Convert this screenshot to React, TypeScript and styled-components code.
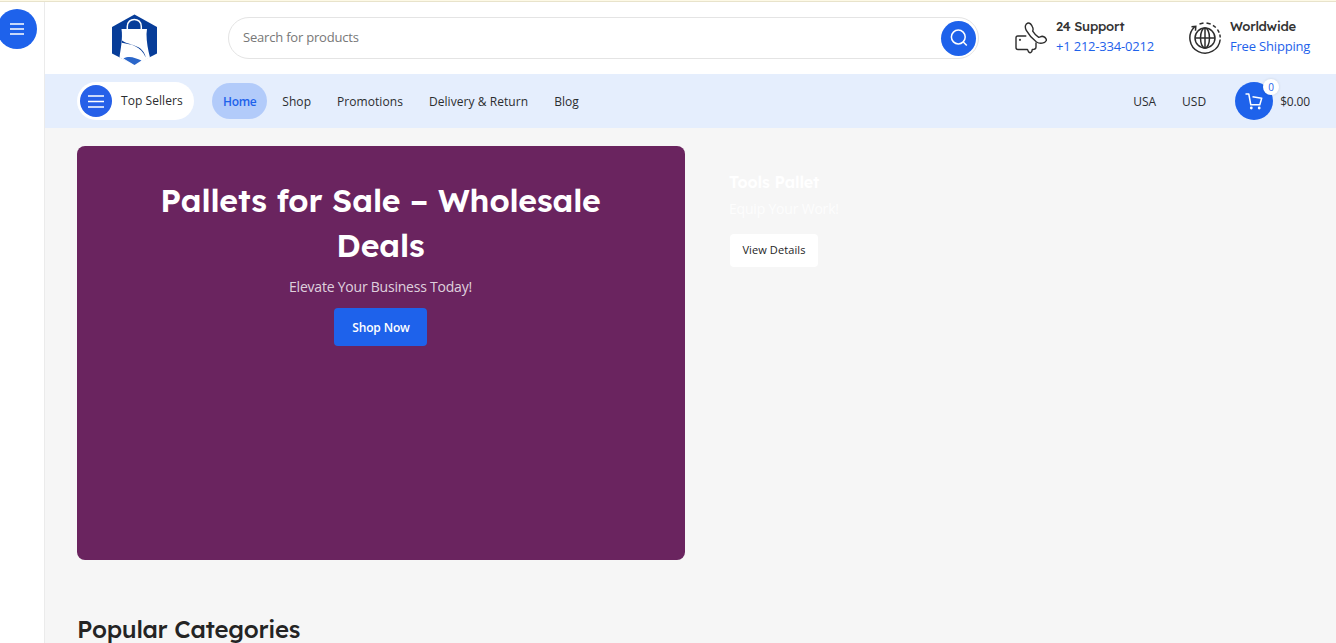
import React from "react";
import styled, { createGlobalStyle } from "styled-components";

const blue = "#1e62eb";
const heading = `Lexend, Lato, "Open Sans", sans-serif`;

const GlobalStyle = createGlobalStyle`
  * { box-sizing: border-box; }
  body { margin: 0; background: #f6f6f6; color: #2b2d30; font-family: "Open Sans", sans-serif; font-size: 13px; overflow: hidden; }
  a { color: inherit; text-decoration: none; }
  h1, h2, h3, p { margin: 0; }
  button { border: 0; padding: 0; font-family: inherit; }
  svg { display: block; flex: none; }
`;

const Page = styled.div`
  height: 643px;
  display: flex;
  flex-direction: column;
  overflow: hidden;
`;
const TopStrip = styled.div`
  height: 2px;
  flex: none;
  background: #fdf9e6;
  border-bottom: 1px solid #e8e3cb;
`;
const Shell = styled.div`
  flex: 1;
  display: flex;
  min-height: 0;
`;
const Rail = styled.aside`
  width: 45px;
  flex: none;
  background: #fff;
  border-right: 1px solid #ebebeb;
  padding-top: 7px;
`;
const RailButton = styled.button`
  width: 40px;
  height: 40px;
  margin-left: -3px;
  border-radius: 50%;
  background: ${blue};
  display: flex;
  align-items: center;
  justify-content: center;
`;
const Main = styled.div`
  flex: 1;
  min-width: 0;
`;
const Header = styled.header`
  height: 72px;
  background: #fff;
  display: flex;
  align-items: center;
  padding-left: 67px;
`;
const Search = styled.div`
  width: 751px;
  height: 42px;
  margin-left: 71px;
  border: 1px solid #e4e4e4;
  border-radius: 21px;
  display: flex;
  align-items: center;
  justify-content: space-between;
  padding: 0 2px 0 14px;
  color: #777;
`;
const SearchText = styled.span`
  font-size: 13px;
  line-height: 18px;
  letter-spacing: -0.2px;
  padding-bottom: 2px;
`;
const SearchButton = styled.button`
  width: 35px;
  height: 35px;
  border-radius: 50%;
  background: ${blue};
  display: flex;
  align-items: center;
  justify-content: center;
`;
const Info = styled.div<{ $left: number }>`
  display: flex;
  align-items: center;
  gap: 9px;
  margin-left: ${(p) => p.$left}px;
`;
const InfoText = styled.div`
  display: flex;
  flex-direction: column;
  line-height: 20px;
  white-space: nowrap;
  padding-bottom: 4px;
`;
const InfoTitle = styled.strong`
  font-family: ${heading};
  font-size: 13px;
  line-height: 19px;
  font-weight: 500;
  letter-spacing: -0.25px;
  color: #333;
`;
const InfoLink = styled.a<{ $spacing: number }>`
  color: ${blue};
  letter-spacing: ${(p) => p.$spacing}px;
`;
const Nav = styled.nav`
  height: 54px;
  background: #e5eefd;
  display: flex;
  align-items: center;
  padding: 0 26px 0 32px;
  font-size: 12px;
  font-weight: 500;
  white-space: nowrap;
`;
const Sellers = styled.a`
  width: 117px;
  height: 38px;
  border-radius: 19px;
  background: #fff;
  display: flex;
  align-items: center;
  gap: 9px;
  padding-left: 3px;
  margin-right: 16px;
`;
const SellersText = styled.span`
  padding-bottom: 1px;
  letter-spacing: 0.06px;
`;
const SellersIcon = styled.span`
  width: 32px;
  height: 32px;
  border-radius: 50%;
  background: #2660e8;
  display: flex;
  align-items: center;
  justify-content: center;
`;
const NavLink = styled.a<{ $active?: boolean }>`
  height: 36px;
  line-height: 37px;
  border-radius: 18px;
  margin: 0 2px;
  padding: 0 11px;
  color: ${(p) => (p.$active ? blue : "inherit")};
  font-weight: ${(p) => (p.$active ? 600 : 500)};
  letter-spacing: ${(p) => (p.$active ? -0.35 : 0.06)}px;
  background: ${(p) => (p.$active ? "#b2cbfa" : "transparent")};
`;
const NavEnd = styled.div`
  margin-left: auto;
  display: flex;
  align-items: center;
`;
const Option = styled.a<{ $gap: number }>`
  margin-right: ${(p) => p.$gap}px;
`;
const Cart = styled.a`
  position: relative;
  width: 38px;
  height: 38px;
  border-radius: 50%;
  background: ${blue};
  display: flex;
  align-items: center;
  justify-content: center;
  margin-right: 7px;
`;
const Amount = styled.span`
  letter-spacing: -0.15px;
`;
const Badge = styled.span`
  position: absolute;
  top: -3px;
  right: -6px;
  width: 16px;
  height: 16px;
  border-radius: 50%;
  background: #fff;
  color: ${blue};
  font-size: 10px;
  line-height: 17px;
  font-weight: 400;
  text-align: center;
  box-shadow: 0 0 3px rgba(0, 0, 0, 0.12);
`;
const Hero = styled.section`
  display: flex;
  padding: 18px 32px 0;
  gap: 44px;
`;
const HeroCard = styled.div`
  width: 608px;
  height: 414px;
  border-radius: 8px;
  background: #6a245f;
  color: #fff;
  display: flex;
  flex-direction: column;
  align-items: center;
  padding: 32px 1px 0 0;
  text-align: center;
`;
const HeroTitle = styled.h1`
  font-family: ${heading};
  font-size: 32px;
  line-height: 45px;
  font-weight: 600;
  letter-spacing: -0.1px;
  width: 500px;
`;
const HeroSub = styled.p`
  font-size: 14px;
  line-height: 22px;
  margin-top: 8px;
  letter-spacing: -0.22px;
  color: rgba(255, 255, 255, 0.8);
`;
const ShopNow = styled.button`
  width: 93px;
  height: 38px;
  margin-top: 10px;
  padding-left: 1px;
  border-radius: 4px;
  background: ${blue};
  color: #fff;
  font-size: 12px;
  font-weight: 600;
  letter-spacing: -0.15px;
`;
const Promo = styled.div`
  padding-top: 25px;
  color: #fff;
`;
const PromoTitle = styled.h3`
  font-family: ${heading};
  font-size: 16px;
  line-height: 22px;
  font-weight: 600;
  letter-spacing: -0.1px;
`;
const PromoSub = styled.p`
  font-size: 14px;
  line-height: 22px;
  margin-top: 5px;
  letter-spacing: -0.2px;
  color: rgba(255, 255, 255, 0.8);
`;
const Details = styled.button`
  width: 88px;
  height: 33px;
  margin: 14px 0 0 1px;
  padding-bottom: 2px;
  border-radius: 4px;
  background: #fff;
  color: #242424;
  font-size: 11px;
  font-weight: 500;
  letter-spacing: 0.1px;
`;
const SectionTitle = styled.h2`
  font-family: ${heading};
  font-size: 24px;
  line-height: 30px;
  font-weight: 500;
  letter-spacing: -0.25px;
  padding: 54px 32px 0;
  color: #242424;
`;

const Bars = ({ w, h }: { w: number; h: number }) => (
  <svg width={w} height={h} viewBox={`0 0 ${w} ${h}`} stroke="#fff" strokeWidth="1.5">
    <path d={`M0 1H${w}M0 ${h / 2}H${w}M0 ${h - 1}H${w}`} />
  </svg>
);

const LogoMark = styled.svg`
  margin-top: 4px;
`;

const Logo = () => (
  <LogoMark width="45" height="52" viewBox="0 0 45 52">
    <path d="M22.500.5 45 13v26.500L22.500 51 0 39.500V13Z" fill="#073d99" />
    <path d="M9.500 15H35l-.5 5c0 8 1.500 16 3.500 23.500L22.500 52 7.500 43.500c1-8 3.500-19 2-28.500Z" fill="#fff" />
    <path d="M15.300 16v-3.500c0-9.500 14-9.500 14 0V16" fill="none" stroke="#fff" strokeWidth="1.500" />
    <path d="M10 26.500C15.500 31.500 31 29.500 33.800 43.500 28.500 32 20 30.500 9.800 28.800Z" fill="#073d99" />
    <path d="M11.500 44.500c6-3.500 12-.5 18 2L22.500 51Z" fill="#2b66c9" />
  </LogoMark>
);

const PhoneIcon = () => (
  <svg width="32" height="32" viewBox="0 0 32 32" fill="none" stroke="#2d2d2d" strokeWidth="1.4" strokeLinejoin="round" strokeLinecap="round">
    <path d="M10.800 14H2.700Q1 14 1 15.800v9.700q0 2 2 2h9.500l1 2.200q1.800 2 3.200 0l.6-2.200q3.700 0 3.700-2.500v-4" />
    <path d="M13 1C10.300 1.800 9.500 5 11.300 8.300 13.500 12.200 17.500 17 21.500 20c3.500 2.200 8.500 1.500 10-1.800-.3-1.700-2.200-3.400-4.300-3.900-1.700.2-2.300 1.200-3.500 1-2.300-1.300-4.300-3.500-6-6.200C18.200 8 18.200 6.500 17.500 5 16.500 2.600 15 .8 13 1Z" />
    <circle cx="5" cy="17.800" r=".4" />
  </svg>
);

const GlobeIcon = () => (
  <svg width="32" height="32" viewBox="0 0 32 32" fill="none" stroke="#2d2d2d" strokeWidth="1.500">
    <circle cx="16" cy="16" r="10" />
    <ellipse cx="16" cy="16" rx="4.500" ry="10" />
    <path d="M6 16h20M16 6v20" />
    <path d="M31.200 17.500A15.200 15.200 0 1 1 5.500 5" />
    <path d="M2.500 4.800l4.300-.4-.3 4.300M10.500 1.900l4-.9M17.500 1l4.200 1M24 3.300l2.800 2.200M28.500 7.500l1.700 3.200M30.900 12.500l.3 3" />
  </svg>
);

const SearchIcon = () => (
  <svg width="18" height="18" viewBox="0 0 18 18" fill="none" stroke="#fff" strokeWidth="1.500">
    <circle cx="8.300" cy="8" r="6.900" />
    <path d="m13.300 13 3.500 3.500" />
  </svg>
);

const CartIcon = () => (
  <svg width="18" height="17" viewBox="0 0 18 17" fill="none" stroke="#fff" strokeWidth="1.500" strokeLinejoin="round">
    <path d="M.5 1h3.300l2 10.800H14.800L16.700 5.200 7.500 3.800" />
    <circle cx="6.300" cy="15" r="1.400" fill="#fff" stroke="none" />
    <circle cx="14.200" cy="15" r="1.400" fill="#fff" stroke="none" />
  </svg>
);

export default function App() {
  return (
    <>
      <GlobalStyle />
      <Page>
        <TopStrip />
        <Shell>
          <Rail>
            <RailButton aria-label="Menu"><Bars w={14} h={12} /></RailButton>
          </Rail>
          <Main>
            <Header>
              <Logo />
              <Search>
                <SearchText>Search for products</SearchText>
                <SearchButton aria-label="Search"><SearchIcon /></SearchButton>
              </Search>
              <Info $left={36}>
                <PhoneIcon />
                <InfoText>
                  <InfoTitle>24 Support</InfoTitle>
                  <InfoLink $spacing={-0.2}>+1 212-334-0212</InfoLink>
                </InfoText>
              </Info>
              <Info $left={35}>
                <GlobeIcon />
                <InfoText>
                  <InfoTitle>Worldwide</InfoTitle>
                  <InfoLink $spacing={-0.18}>Free Shipping</InfoLink>
                </InfoText>
              </Info>
            </Header>
            <Nav>
              <Sellers>
                <SellersIcon><Bars w={16} h={13} /></SellersIcon>
                <SellersText>Top Sellers</SellersText>
              </Sellers>
              <NavLink $active>Home</NavLink>
              <NavLink>Shop</NavLink>
              <NavLink>Promotions</NavLink>
              <NavLink>Delivery &amp; Return</NavLink>
              <NavLink>Blog</NavLink>
              <NavEnd>
                <Option $gap={26}>USA</Option>
                <Option $gap={29}>USD</Option>
                <Cart><CartIcon /><Badge>0</Badge></Cart>
                <Amount>$0.00</Amount>
              </NavEnd>
            </Nav>
            <Hero>
              <HeroCard>
                <HeroTitle>Pallets for Sale – Wholesale Deals</HeroTitle>
                <HeroSub>Elevate Your Business Today!</HeroSub>
                <ShopNow>Shop Now</ShopNow>
              </HeroCard>
              <Promo>
                <PromoTitle>Tools Pallet</PromoTitle>
                <PromoSub>Equip Your Work!</PromoSub>
                <Details>View Details</Details>
              </Promo>
            </Hero>
            <SectionTitle>Popular Categories</SectionTitle>
          </Main>
        </Shell>
      </Page>
    </>
  );
}
